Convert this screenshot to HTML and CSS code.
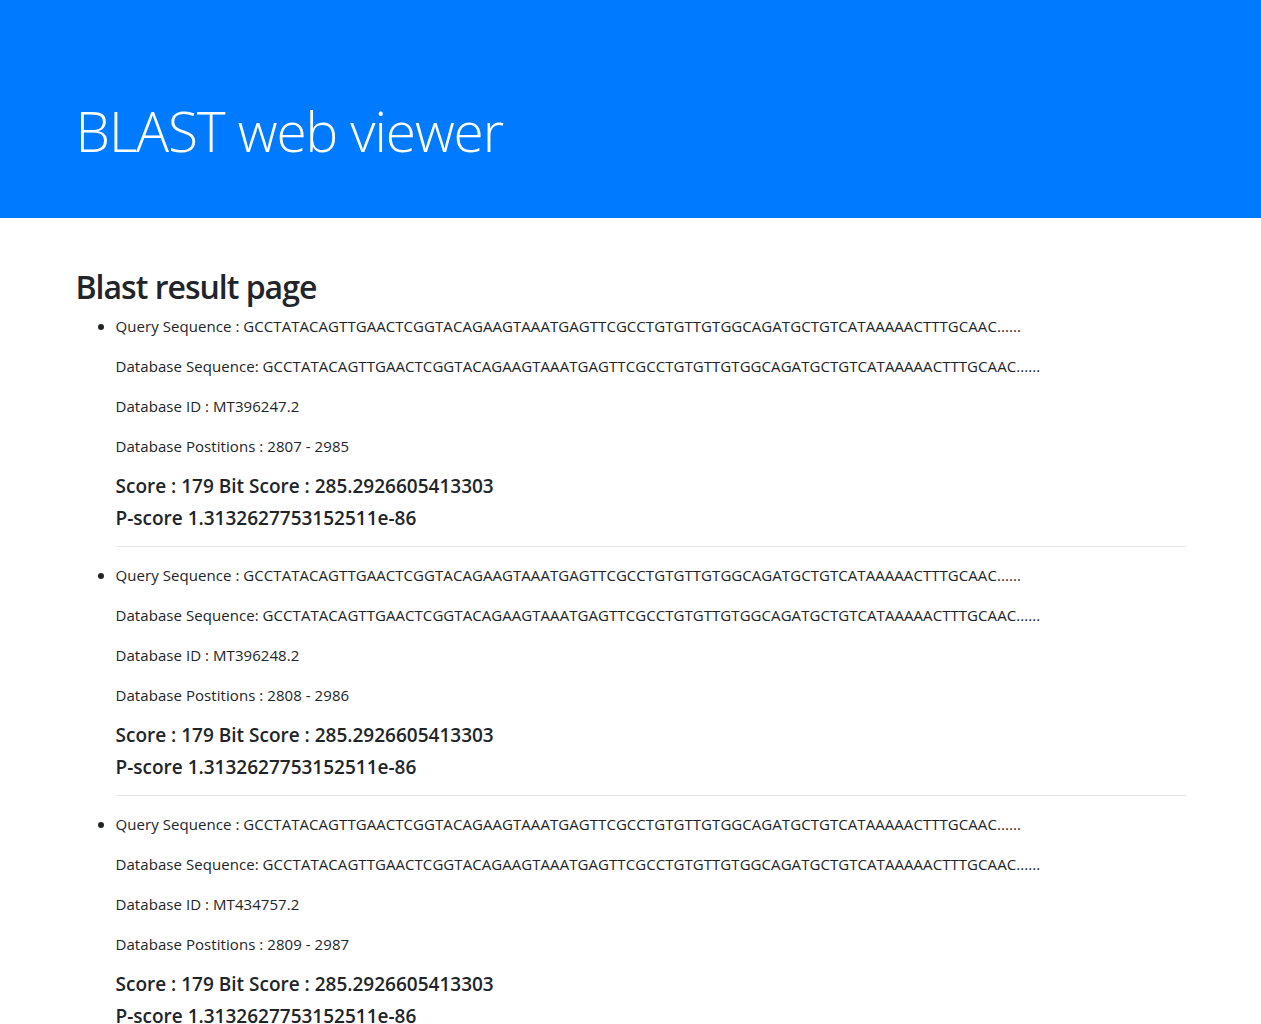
FILE: index.html
```html
<!DOCTYPE html>
<html lang="en">
<head>
<meta charset="utf-8">
<title>BLAST web viewer</title>
<link rel="stylesheet" href="styles.css">
</head>
<body>
<header class="jumbotron">
  <div class="container">
    <h1 class="display-title">BLAST web viewer</h1>
  </div>
</header>
<main class="container">
  <h2 class="page-title">Blast result page</h2>
  <ul class="results">
    <li class="result">
      <p>Query Sequence : GCCTATACAGTTGAACTCGGTACAGAAGTAAATGAGTTCGCCTGTGTTGTGGCAGATGCTGTCATAAAAACTTTGCAAC......</p>
      <p>Database Sequence: GCCTATACAGTTGAACTCGGTACAGAAGTAAATGAGTTCGCCTGTGTTGTGGCAGATGCTGTCATAAAAACTTTGCAAC......</p>
      <p>Database ID : MT396247.2</p>
      <p>Database Postitions : 2807 - 2985</p>
      <h5 class="score">Score : 179 Bit Score : 285.2926605413303</h5>
      <h5 class="score">P-score 1.3132627753152511e-86</h5>
      <hr>
    </li>
    <li class="result">
      <p>Query Sequence : GCCTATACAGTTGAACTCGGTACAGAAGTAAATGAGTTCGCCTGTGTTGTGGCAGATGCTGTCATAAAAACTTTGCAAC......</p>
      <p>Database Sequence: GCCTATACAGTTGAACTCGGTACAGAAGTAAATGAGTTCGCCTGTGTTGTGGCAGATGCTGTCATAAAAACTTTGCAAC......</p>
      <p>Database ID : MT396248.2</p>
      <p>Database Postitions : 2808 - 2986</p>
      <h5 class="score">Score : 179 Bit Score : 285.2926605413303</h5>
      <h5 class="score">P-score 1.3132627753152511e-86</h5>
      <hr>
    </li>
    <li class="result">
      <p>Query Sequence : GCCTATACAGTTGAACTCGGTACAGAAGTAAATGAGTTCGCCTGTGTTGTGGCAGATGCTGTCATAAAAACTTTGCAAC......</p>
      <p>Database Sequence: GCCTATACAGTTGAACTCGGTACAGAAGTAAATGAGTTCGCCTGTGTTGTGGCAGATGCTGTCATAAAAACTTTGCAAC......</p>
      <p>Database ID : MT434757.2</p>
      <p>Database Postitions : 2809 - 2987</p>
      <h5 class="score">Score : 179 Bit Score : 285.2926605413303</h5>
      <h5 class="score">P-score 1.3132627753152511e-86</h5>
      <hr>
    </li>
  </ul>
</main>
</body>
</html>
```
FILE: styles.css
```css
*, *::before, *::after {
  box-sizing: border-box;
}
html, body {
  margin: 0;
  padding: 0;
}
body {
  font-family: "Open Sans", "Noto Sans", sans-serif;
  font-size: 16px;
  line-height: 1.5;
  color: #212529;
  background: #fff;
}
.container {
  max-width: 1140px;
  margin: 0 auto;
  padding: 0 15px;
}
.jumbotron {
  background: #007bff;
  color: #fff;
  padding: 97px 0 54px;
  height: 218px;
}
.display-title {
  margin: 0;
  font-size: 55px;
  font-weight: 300;
  line-height: 67px;
  letter-spacing: -1.1px;
}
.page-title {
  margin: 50px 0 8px;
  font-size: 32px;
  font-weight: 600;
  line-height: 38.4px;
  letter-spacing: -1px;
}
.results {
  margin: 0 0 16px;
  padding-left: 40px;
}
.result p {
  margin: 0 0 16px;
  font-size: 15px;
  line-height: 24px;
  font-weight: 400;
  letter-spacing: 0.06px;
  white-space: nowrap;
}
.score {
  margin: 0 0 8px;
  font-size: 19px;
  font-weight: 600;
  line-height: 24px;
}
.result hr {
  margin: 16px 0;
  border: 0;
  border-top: 1px solid rgba(0, 0, 0, 0.1);
}
```
